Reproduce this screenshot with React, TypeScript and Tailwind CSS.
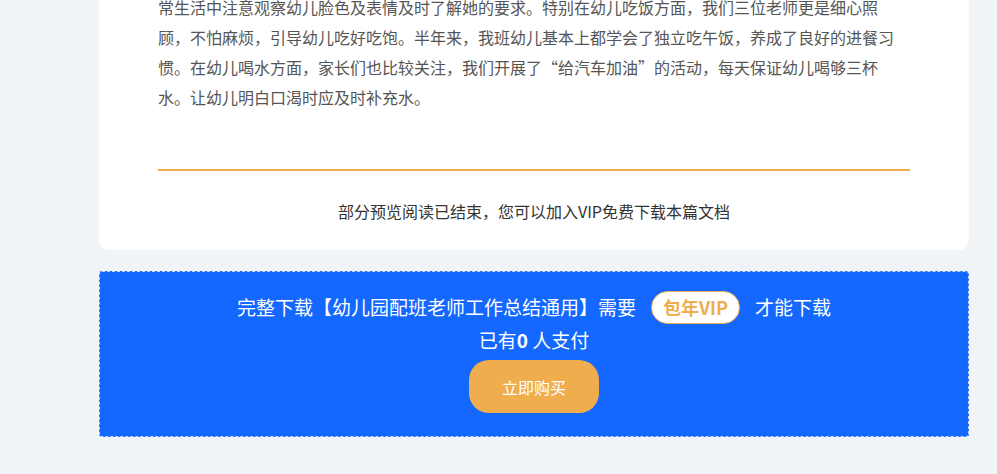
export default function App() {
  const lines = [
    '常生活中注意观察幼儿脸色及表情及时了解她的要求。特别在幼儿吃饭方面，我们三位老师更是细心照',
    '顾，不怕麻烦，引导幼儿吃好吃饱。半年来，我班幼儿基本上都学会了独立吃午饭，养成了良好的进餐习',
    '惯。在幼儿喝水方面，家长们也比较关注，我们开展了“给汽车加油”的活动，每天保证幼儿喝够三杯',
    '水。让幼儿明白口渴时应及时补充水。',
  ]

  return (
    <div
      className="min-h-screen overflow-hidden bg-[#f1f4f7]"
      style={{ fontFamily: '"Microsoft YaHei", "Noto Sans CJK SC", "Noto Sans", sans-serif' }}
    >
      <div className="ml-[99px] w-[870px] -mt-[8px]">
        {/* preview card */}
        <div className="rounded-b-[10px] bg-white px-[59px] pb-[27px]">
          <div className="text-[16px] leading-[30px] text-[#555]">
            {lines.map((l, i) => (
              <div key={i} className="whitespace-nowrap">
                {l}
              </div>
            ))}
          </div>
          <div className="mt-[57px] h-[2px] bg-[#f0ad4e]" />
          <p className="mt-[28px] text-center text-[16px] leading-[24px] text-[#333]">
            部分预览阅读已结束，您可以加入VIP免费下载本篇文档
          </p>
        </div>

        {/* download box */}
        <div className="mt-[21px] flex flex-col items-center rounded-[3px] border border-dashed border-[#c9d5ee] bg-[#1467ff] pt-[19px] pb-[23px] text-white">
          <div className="flex h-[33px] items-center text-[19px]">
            <span>完整下载【幼儿园配班老师工作总结通用】需要</span>
            <span className="mx-[15px] flex h-[33px] items-center rounded-full border border-[#f0ad4e] bg-white px-[11px] text-[18px] font-bold text-[#f0ad4e]">
              包年VIP
            </span>
            <span>才能下载</span>
          </div>
          <div className="mt-[4px] text-[19px] leading-[24px]">
            已有<span className="font-semibold">0</span> 人支付
          </div>
          <button className="mt-[8px] h-[53px] w-[130px] rounded-[20px] bg-[#f0ad4e] text-[16px] text-white">
            立即购买
          </button>
        </div>
      </div>
    </div>
  )
}
